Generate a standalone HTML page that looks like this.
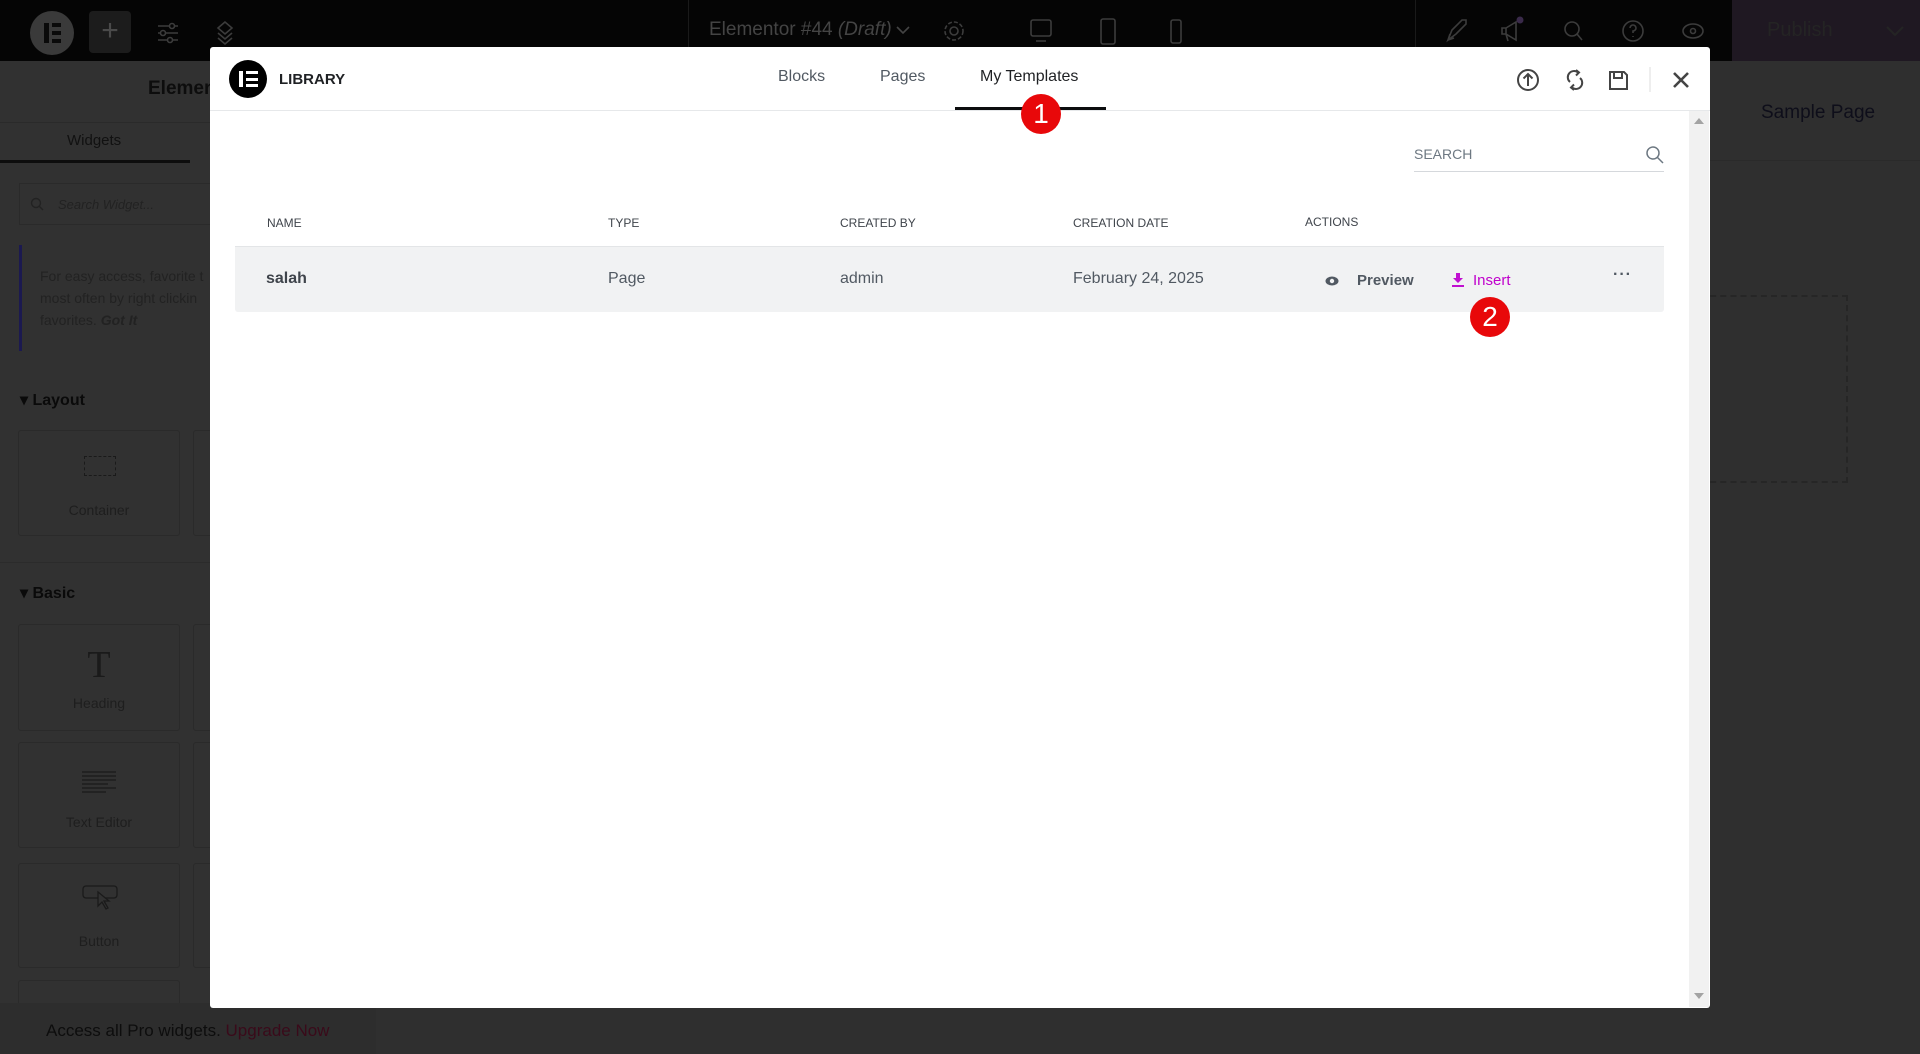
<!DOCTYPE html>
<html><head><meta charset="utf-8"><style>
*{box-sizing:border-box;margin:0;padding:0}
body{width:1920px;height:1054px;overflow:hidden;background:#2f2f2f;font-family:"Liberation Sans",sans-serif;position:relative}
.abs{position:absolute}
.card{position:absolute;width:162px;border:1px solid #2a2a2a;border-radius:3px}
.lbl{position:absolute;width:162px;text-align:center;color:#1e1e1e;font-size:14px}
</style></head><body>
<!-- top bar -->
<div class="abs" style="left:0;top:0;width:1920px;height:61px;background:#050505"></div>
<div class="abs" style="left:30px;top:11px;width:44px;height:44px;border-radius:50%;background:#3a3a3a"></div>
<div class="abs" style="left:44px;top:23px;width:5px;height:20px;background:#0a0a0a"></div>
<div class="abs" style="left:52px;top:23px;width:9px;height:4px;background:#0a0a0a"></div>
<div class="abs" style="left:52px;top:31px;width:9px;height:4px;background:#0a0a0a"></div>
<div class="abs" style="left:52px;top:39px;width:9px;height:4px;background:#0a0a0a"></div>
<div class="abs" style="left:89px;top:11px;width:42px;height:42px;border-radius:4px;background:#1c1c1c;color:#4a4a4a;font-size:30px;line-height:40px;text-align:center">+</div>
<svg class="abs" style="left:150px;top:18px" width="90" height="30" fill="none" stroke="#3c3c3c" stroke-width="1.6">
<path d="M8 8h20M8 15h20M8 22h20"/><circle cx="22" cy="8" r="2.5" fill="#050505"/><circle cx="13" cy="15" r="2.5" fill="#050505"/><circle cx="20" cy="22" r="2.5" fill="#050505"/>
<path d="M75 4l-7 6 7 6 7-6z M68 15l7 6 7-6 M68 20l7 6 7-6"/>
</svg>
<div class="abs" style="left:688px;top:0;width:1px;height:61px;background:#1a1a1a"></div>
<div class="abs" style="left:709px;top:19px;color:#444;font-size:19px">Elementor #44 <i>(Draft)</i></div>
<svg class="abs" style="left:895px;top:24px" width="16" height="12" fill="none" stroke="#444" stroke-width="1.6"><path d="M2 3l6 6 6-6"/></svg>
<svg class="abs" style="left:940px;top:16px" width="260" height="32" fill="none" stroke="#3c3c3c" stroke-width="1.6">
<circle cx="14" cy="15" r="4"/><circle cx="14" cy="15" r="9" stroke-dasharray="4 2"/>
<rect x="91" y="4" width="20" height="16" rx="2"/><path d="M96 25h10"/>
<rect x="161" y="3" width="14" height="25" rx="2"/>
<rect x="231" y="4" width="10" height="23" rx="2"/>
</svg>
<div class="abs" style="left:1415px;top:0;width:1px;height:61px;background:#1a1a1a"></div>
<svg class="abs" style="left:1440px;top:14px" width="290" height="34" fill="none" stroke="#3c3c3c" stroke-width="1.6">
<path d="M8 26l4-10 10-10 4 0 0 4-10 10z M10 20l-2 6 6-2"/>
<path d="M66 14l10-6v18l-10-6z M66 14h-4v6h4 M66 20l2 7"/><circle cx="80" cy="6" r="3.5" fill="#3a2a4a" stroke="none"/>
<circle cx="132" cy="15" r="7"/><path d="M137 20l5 6"/>
<circle cx="193" cy="17" r="10"/><path d="M190 14a3 3 0 1 1 3 3v2M193 22v1"/>
<ellipse cx="253" cy="17" rx="10" ry="7"/><circle cx="253" cy="17" r="2.5"/>
</svg>
<div class="abs" style="left:1732px;top:0;width:188px;height:61px;background:#1f1822"></div>
<div class="abs" style="left:1767px;top:19px;color:#242424;font-size:20px">Publish</div>
<svg class="abs" style="left:1885px;top:24px" width="20" height="14" fill="none" stroke="#242424" stroke-width="2"><path d="M2 3l8 8 8-8"/></svg>
<!-- left panel -->
<div class="abs" style="left:0;top:61px;width:376px;height:993px;background:#313131"></div>
<div class="abs" style="left:148px;top:78px;color:#0d0d0d;font-size:19px;font-weight:bold">Elemen</div>
<div class="abs" style="left:0;top:122px;width:376px;height:1px;background:#2a2a2a"></div>
<div class="abs" style="left:67px;top:132px;color:#111;font-size:15px">Widgets</div>
<div class="abs" style="left:0;top:160px;width:190px;height:3px;background:#0d0d0d"></div>
<div class="abs" style="left:19px;top:183px;width:200px;height:42px;border:1px solid #2a2a2a;color:#222;font-size:13px;font-style:italic;padding:13px 0 0 38px">Search Widget...</div>
<svg class="abs" style="left:30px;top:197px" width="14" height="14" fill="none" stroke="#222" stroke-width="1.4"><circle cx="6" cy="6" r="4.5"/><path d="M9.5 9.5L13 13"/></svg>
<div class="abs" style="left:19px;top:245px;width:3px;height:106px;background:#1b1950"></div>
<div class="abs" style="left:40px;top:265px;color:#222;font-size:14px;line-height:22px">For easy access, favorite t<br>most often by right clickin<br>favorites. <b><i>Got It</i></b></div>
<div class="abs" style="left:20px;top:390px;color:#0a0a0a;font-size:16px;font-weight:bold">&#9662; Layout</div>
<div class="card" style="left:18px;top:430px;height:106px"></div>
<div class="card" style="left:193px;top:430px;height:106px"></div>
<div class="abs" style="left:84px;top:456px;width:32px;height:20px;border:1px dashed #1a1a1a"></div>
<div class="lbl" style="left:18px;top:502px">Container</div>
<div class="abs" style="left:0;top:562px;width:376px;height:1px;background:#2b2b2b"></div>
<div class="abs" style="left:20px;top:583px;color:#0a0a0a;font-size:16px;font-weight:bold">&#9662; Basic</div>
<div class="card" style="left:18px;top:624px;height:107px"></div>
<div class="card" style="left:193px;top:624px;height:107px"></div>
<div class="lbl" style="left:18px;top:643px;font-size:38px;font-family:'Liberation Serif',serif;color:#1a1a1a">T</div>
<div class="lbl" style="left:18px;top:695px">Heading</div>
<div class="card" style="left:18px;top:742px;height:106px"></div>
<div class="card" style="left:193px;top:742px;height:106px"></div>
<svg class="abs" style="left:82px;top:771px" width="36" height="22" stroke="#1a1a1a" stroke-width="1.2"><path d="M0 1h34M0 5h34M0 9h34M0 13h26M0 17h34M0 21h24"/></svg>
<div class="lbl" style="left:18px;top:814px">Text Editor</div>
<div class="card" style="left:18px;top:863px;height:105px"></div>
<div class="card" style="left:193px;top:863px;height:105px"></div>
<svg class="abs" style="left:82px;top:884px" width="38" height="30" fill="none" stroke="#1a1a1a" stroke-width="1.3"><rect x="1" y="2" width="34" height="12" rx="3"/><path d="M16 8l0 14 4-4 4 7 2-1-4-7 5 0z" fill="#313131"/></svg>
<div class="lbl" style="left:18px;top:933px">Button</div>
<div class="card" style="left:18px;top:980px;height:40px"></div>
<div class="abs" style="left:0;top:1003px;width:376px;height:51px;background:#2d2d2d"></div>
<div class="abs" style="left:46px;top:1021px;color:#0d0d0d;font-size:17px">Access all Pro widgets. <span style="color:#3a0a1a">Upgrade Now</span></div>
<!-- canvas right -->
<div class="abs" style="left:1761px;top:102px;color:#0e0e1a;font-size:19px">Sample Page</div>
<div class="abs" style="left:1710px;top:160px;width:210px;height:1px;background:#2a2a2a"></div>
<div class="abs" style="left:1700px;top:295px;width:148px;height:188px;border:2px dashed #262626;border-left:none"></div>
<!-- modal -->
<div class="abs" style="left:210px;top:47px;width:1500px;height:961px;background:#fff;border-radius:3px"></div>
<div class="abs" style="left:210px;top:110px;width:1500px;height:1px;background:#e6e8ea"></div>
<div class="abs" style="left:229px;top:60px;width:38px;height:38px;border-radius:50%;background:#000"></div>
<div class="abs" style="left:239px;top:71px;width:4px;height:16px;background:#fff"></div>
<div class="abs" style="left:246px;top:71px;width:12px;height:3px;background:#fff"></div>
<div class="abs" style="left:246px;top:77.5px;width:12px;height:3px;background:#fff"></div>
<div class="abs" style="left:246px;top:84px;width:12px;height:3px;background:#fff"></div>
<div class="abs" style="left:279px;top:71px;color:#1f2124;font-size:15px;font-weight:bold">LIBRARY</div>
<div class="abs" style="left:778px;top:68px;color:#515962;font-size:16px">Blocks</div>
<div class="abs" style="left:880px;top:68px;color:#515962;font-size:16px">Pages</div>
<div class="abs" style="left:980px;top:68px;color:#1f2124;font-size:16px">My Templates</div>
<div class="abs" style="left:955px;top:107px;width:151px;height:3px;background:#0c0d0e"></div>
<svg class="abs" style="left:1510px;top:62px" width="190" height="36" viewBox="0 0 190 36" fill="none" stroke="#444" stroke-width="2">
<circle cx="18" cy="18" r="10"/><path d="M18 24V12M13.5 16.5L18 12l4.5 4.5"/>
<path d="M60 20a6 6 0 0 1 8-9.5" /><path d="M66 8l3 2.5-3 3" fill="none"/>
<path d="M70 16a6 6 0 0 1-8 9.5"/><path d="M64 28l-3-2.5 3-3" fill="none"/>
<path d="M100 10h14l3 3v14h-17z M104 10v6h8v-6"/>
<path d="M140 5v25" stroke="#ddd" stroke-width="1"/>
<path d="M164 11l14 14M178 11l-14 14" stroke-width="2.6"/>
</svg>
<!-- scrollbar -->
<div class="abs" style="left:1689px;top:111px;width:20px;height:896px;background:#f1f1f1"></div>
<div class="abs" style="left:1694px;top:118px;width:0;height:0;border-left:5px solid transparent;border-right:5px solid transparent;border-bottom:6px solid #a3a3a3"></div>
<div class="abs" style="left:1694px;top:993px;width:0;height:0;border-left:5px solid transparent;border-right:5px solid transparent;border-top:6px solid #a3a3a3"></div>
<!-- search -->
<div class="abs" style="left:1414px;top:146px;color:#6d7882;font-size:14px">SEARCH</div>
<div class="abs" style="left:1414px;top:171px;width:250px;height:1px;background:#d5d8dc"></div>
<svg class="abs" style="left:1645px;top:145px" width="20" height="20" fill="none" stroke="#6d7882" stroke-width="1.5"><circle cx="8" cy="8" r="6"/><path d="M12.5 12.5L18 18"/></svg>
<!-- table -->
<div class="abs" style="left:267px;top:216px;color:#3f444b;font-size:12px">NAME</div>
<div class="abs" style="left:608px;top:216px;color:#3f444b;font-size:12px">TYPE</div>
<div class="abs" style="left:840px;top:216px;color:#3f444b;font-size:12px">CREATED BY</div>
<div class="abs" style="left:1073px;top:216px;color:#3f444b;font-size:12px">CREATION DATE</div>
<div class="abs" style="left:1305px;top:215px;color:#3f444b;font-size:12px">ACTIONS</div>
<div class="abs" style="left:235px;top:246px;width:1429px;height:66px;background:#f1f2f3;border-top:1px solid #e3e5e7;border-radius:0 0 3px 3px"></div>
<div class="abs" style="left:266px;top:270px;color:#3f444b;font-size:16px;font-weight:bold">salah</div>
<div class="abs" style="left:608px;top:270px;color:#515962;font-size:16px">Page</div>
<div class="abs" style="left:840px;top:270px;color:#515962;font-size:16px">admin</div>
<div class="abs" style="left:1073px;top:270px;color:#515962;font-size:16px">February 24, 2025</div>
<svg class="abs" style="left:1325px;top:274px" width="14" height="14"><ellipse cx="7" cy="7" rx="6.5" ry="4.5" fill="#515962"/><circle cx="7" cy="7" r="2.2" fill="#f1f2f3"/></svg>
<div class="abs" style="left:1357px;top:272px;color:#515962;font-size:15px;font-weight:bold">Preview</div>
<svg class="abs" style="left:1452px;top:273px" width="12" height="14" fill="#c010d0"><path d="M4 0h4v5h3l-5 5-5-5h3z"/><rect x="0" y="12" width="12" height="2"/></svg>
<div class="abs" style="left:1473px;top:272px;color:#c000cc;font-size:15px">Insert</div>
<div class="abs" style="left:1613px;top:266px;color:#515962;font-size:16px;font-weight:bold;letter-spacing:1px">&middot;&middot;&middot;</div>
<!-- badges -->
<div class="abs" style="left:1021px;top:94px;width:40px;height:40px;border-radius:50%;background:#e8080a;color:#fff;font-size:28px;text-align:center;line-height:40px">1</div>
<div class="abs" style="left:1470px;top:297px;width:40px;height:40px;border-radius:50%;background:#e8080a;color:#fff;font-size:28px;text-align:center;line-height:40px">2</div>
</body></html>
